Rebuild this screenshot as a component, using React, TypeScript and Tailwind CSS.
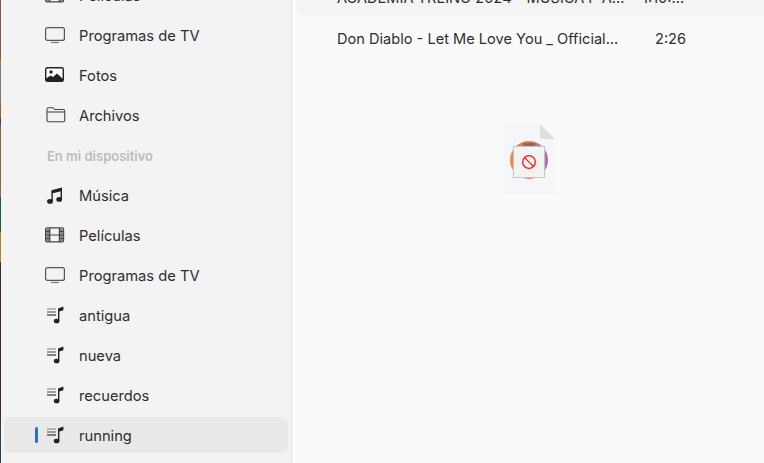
import { ReactNode } from 'react';

const TvIcon = () => (
  <svg width="20" height="17" viewBox="0 0 20 17" fill="none">
    <rect x="0.6" y="0.6" width="18.8" height="12.8" rx="2" stroke="#555" strokeWidth="1.2" />
    <path d="M6 15.5h8" stroke="#777" strokeWidth="1.2" />
  </svg>
);

const PhotoIcon = () => (
  <svg width="20" height="16" viewBox="0 0 20 16">
    <rect x="0.7" y="0.7" width="17.6" height="13.6" rx="1.6" fill="#fff" stroke="#222" strokeWidth="1.4" />
    <circle cx="6" cy="5" r="1.7" fill="#222" />
    <path d="M1 14v-2.5l4.5-3 2.5 1.6 4-3.6 6 5.5V14Z" fill="#222" />
  </svg>
);

const FolderIcon = () => (
  <svg className="ml-px" width="20" height="16" viewBox="0 0 20 16" fill="none" stroke="#444" strokeWidth="1.1">
    <path d="M1 4V2.2C1 1.3 1.6.8 2.4.8h4.2c.6 0 .9.2 1.3.7l.9 1h8.4c.9 0 1.5.6 1.5 1.5v9.2c0 .9-.6 1.5-1.5 1.5H2.5c-.9 0-1.5-.6-1.5-1.5Z" />
    <path d="M1 5h17.7" />
  </svg>
);

const NoteIcon = () => (
  <svg className="ml-[2px]" width="16" height="17" viewBox="0 0 16 17" fill="#222">
    <path d="M4.4 3.2 15 .6v3.4L5.8 6.2V14H4.4Z" />
    <path d="M13.6 1H15v11h-1.4Z" />
    <ellipse cx="3" cy="14.4" rx="2.9" ry="2.3" />
    <ellipse cx="12.2" cy="12.4" rx="2.9" ry="2.3" />
  </svg>
);

const FilmIcon = () => (
  <svg width="20" height="16" viewBox="0 0 20 16" fill="none" stroke="#444" strokeWidth="1.2">
    <rect x="0.6" y="0.8" width="18" height="14" rx="1.6" />
    <path d="M1 2h3.8v12H1ZM14.4 2h3.8v12h-3.8Z" fill="#8a8a8a" stroke="none" />
    <path d="M4.8 1v14M14.4 1v14M1 4.5h3.8M1 8h3.8M1 11.5h3.8M14.4 4.5h3.8M14.4 8h3.8M14.4 11.5h3.8M4.8 8h9.6" />
  </svg>
);

const PlaylistIcon = () => (
  <svg className="ml-[2px]" width="17" height="18" viewBox="0 0 17 18">
    <path d="M0 3h9" stroke="#8a8a8a" strokeWidth="1.1" />
    <path d="M0 6h9" stroke="#555" strokeWidth="1.1" />
    <path d="M0 9h9" stroke="#222" strokeWidth="1.1" />
    <path d="M11 2.4 16.4.4v3.8L12.4 5.6V15H11Z" fill="#222" />
    <ellipse cx="9.6" cy="15" rx="2.8" ry="2.3" fill="#222" />
  </svg>
);

type Item = { label: string; icon: ReactNode; active?: boolean };

const items: Item[] = [
  { label: 'Películas', icon: <FilmIcon /> },
  { label: 'Programas de TV', icon: <TvIcon /> },
  { label: 'Fotos', icon: <PhotoIcon /> },
  { label: 'Archivos', icon: <FolderIcon /> },
];

const deviceItems: Item[] = [
  { label: 'Música', icon: <NoteIcon /> },
  { label: 'Películas', icon: <FilmIcon /> },
  { label: 'Programas de TV', icon: <TvIcon /> },
  { label: 'antigua', icon: <PlaylistIcon /> },
  { label: 'nueva', icon: <PlaylistIcon /> },
  { label: 'recuerdos', icon: <PlaylistIcon /> },
  { label: 'running', icon: <PlaylistIcon />, active: true },
];

function SidebarRow({ label, icon, active }: Item) {
  return (
    <div className={`my-0.5 ml-1 mr-[3px] flex h-9 items-center rounded-md ${active ? 'bg-[#e9e9e9]' : ''}`}>
      <div className="flex w-[34px] justify-end">
        {active && <span className="h-4 w-[3px] rounded-full bg-[#2f6bdc]" />}
      </div>
      <div className="ml-[7px] flex w-[34px] shrink-0 items-center">{icon}</div>
      <span className="pt-[2px] text-[14.7px] text-[#2e2e2e]">{label}</span>
    </div>
  );
}

export default function App() {
  return (
    <div className="relative flex h-[463px] w-[764px] overflow-hidden bg-[#fafafa] font-['Inter',sans-serif]">
      {/* sliver of desktop wallpaper behind the window */}
      <div className="flex w-px shrink-0 flex-col">
        <div className="h-[60px] bg-[#85583f]" />
        <div className="h-[5px] bg-[#a87c2a]" />
        <div className="h-[37px] bg-[#7d7d7d]" />
        <div className="h-[16px] bg-[#a0622c]" />
        <div className="h-[7px] bg-[#444444]" />
        <div className="h-[65px] bg-[#7d6a40]" />
        <div className="h-[7px] bg-[#777777]" />
        <div className="h-[35px] bg-[#1f5a3a]" />
        <div className="h-[30px] bg-[#a8842e]" />
        <div className="h-[158px] bg-[#3a2e2a]" />
        <div className="h-[43px] bg-[#2f3f4a]" />
      </div>

      <aside className="w-[291px] shrink-0 overflow-hidden border-r border-[#e4e4e4] bg-[#f3f3f3]">
        <div className="-mt-[25px] -ml-px flex flex-col">
          {items.map((item, i) => (
            <SidebarRow key={i} {...item} />
          ))}
          <div className="flex h-10 items-center pl-[47px] pt-[3px] text-[13px] font-semibold text-[#bcbcbc]">
            En mi dispositivo
          </div>
          {deviceItems.map((item, i) => (
            <SidebarRow key={i} {...item} />
          ))}
        </div>
      </aside>

      <main className="min-w-0 flex-1 pl-1">
        <div className="flex h-4 items-end rounded-bl-md bg-[#f4f4f4] pb-[6px] pl-[41px] text-[14.6px] text-[#2e2e2e]">
          <span className="w-[305px] shrink-0 whitespace-nowrap">ACADEMIA TREINO 2024 - MÚSICA P A...</span>
          <span className="shrink-0 whitespace-nowrap">1:10:...</span>
        </div>
        <div className="flex h-12 items-center pl-[41px] text-[14.6px] text-[#2e2e2e]">
          <span className="w-[318px] shrink-0 whitespace-nowrap">Don Diablo - Let Me Love You _ Official...</span>
          <span>2:26</span>
        </div>
      </main>

      {/* drag ghost */}
      <div className="absolute left-[503px] top-[124px] h-[70px] w-[52px]">
        <svg width="52" height="70" viewBox="0 0 52 70">
          <defs>
            <linearGradient id="disc" x1="0" x2="1" y1="0" y2="0">
              <stop offset="0" stopColor="#f08a3c" />
              <stop offset="0.6" stopColor="#e8765c" />
              <stop offset="1" stopColor="#a868c0" />
            </linearGradient>
          </defs>
          <path d="M0 0h37l15 15v55H0Z" fill="#f5f6fa" />
          <path d="M37 0l15 15H37Z" fill="#dedede" />
          <circle cx="26" cy="36" r="19" fill="url(#disc)" />
          <path d="M20 19h12v3H20Z" fill="#8a6a60" />
        </svg>
        <div className="absolute left-[10px] top-[22px] flex h-[32px] w-[32px] items-center justify-center border border-[#c4c4c4] bg-[#f3f3f3]">
          <svg width="16" height="16" viewBox="0 0 16 16" fill="none" stroke="#f01818" strokeWidth="1.3">
            <circle cx="8" cy="8" r="6.3" />
            <path d="M3.6 3.6l8.8 8.8" />
          </svg>
        </div>
      </div>
    </div>
  );
}
